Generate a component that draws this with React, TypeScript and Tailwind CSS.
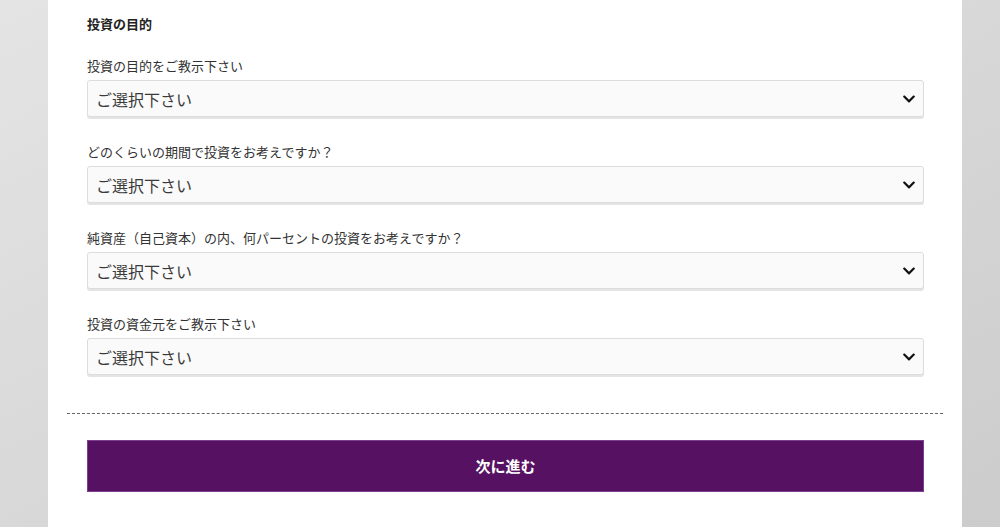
import { FaChevronDown } from 'react-icons/fa'

const questions = [
  '投資の目的をご教示下さい',
  'どのくらいの期間で投資をお考えですか？',
  '純資産（自己資本）の内、何パーセントの投資をお考えですか？',
  '投資の資金元をご教示下さい',
]

function SelectBox() {
  return (
    <div className="flex h-[37px] items-center justify-between rounded-[3px] border border-[#dcdcdc] bg-[#fafafa] pl-[8px] pr-[7px] shadow-[0_2px_0_#e4e4e4]">
      <span className="text-[16px] text-[#3a3a3a]">ご選択下さい</span>
      <FaChevronDown className="h-[14px] w-[14px] text-[#111]" />
    </div>
  )
}

export default function App() {
  return (
    <div
      className="flex h-[527px] w-full justify-start overflow-hidden bg-gradient-to-br from-[#e4e4e4] to-[#cccccc] pl-[48px]"
      style={{ fontFamily: '"Noto Sans CJK JP", "Noto Sans", sans-serif' }}
    >
      <div className="w-[914px] bg-white px-[19px]">
        <div className="pl-[20px] pr-[19px] pt-[14px]">
          <h2 className="text-[13px] font-bold leading-[20px] text-[#222]">投資の目的</h2>
          <div className="mt-[23px] flex flex-col gap-[26px]">
            {questions.map((q) => (
              <div key={q}>
                <p className="mb-[5px] text-[13px] leading-[18px] text-[#333]">{q}</p>
                <SelectBox />
              </div>
            ))}
          </div>
        </div>
        <div className="mt-[38px] border-t border-dashed border-[#666]" />
        <div className="pl-[20px] pr-[19px] pt-[26px]">
          <button className="flex h-[52px] w-full items-center justify-center border border-[#7b3f8e] bg-[#571162] text-[15px] font-bold text-white">
            次に進む
          </button>
        </div>
      </div>
    </div>
  )
}
